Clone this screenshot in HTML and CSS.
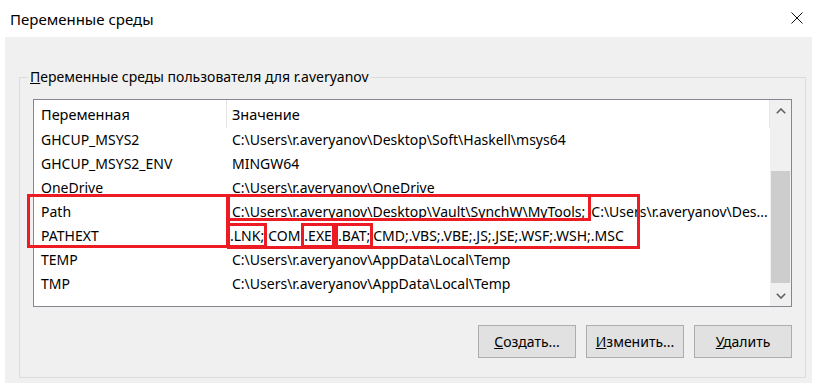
FILE: index.html
```html
<!DOCTYPE html>
<html lang="ru">
<head>
    <meta charset="UTF-8">
    <title>Переменные среды</title>
    <link rel="stylesheet" href="styles.css">
</head>
<body>
    <div class="titlebar">
        <h1>Переменные среды</h1>
        <svg class="close" viewBox="0 0 12 12" width="12" height="12">
            <path d="M0.5 0.5L11.5 11.5M11.5 0.5L0.5 11.5" stroke="#111" stroke-width="1"/>
        </svg>
    </div>

    <div class="panel">
        <fieldset class="group">
            <legend><u>П</u>еременные среды пользователя для r.averyanov</legend>

            <div class="list">
                <div class="list-body">
                    <div class="row head">
                        <div class="c1">Переменная</div>
                        <div class="c2">Значение</div>
                    </div>
                    <div class="row">
                        <div class="c1">GHCUP_MSYS2</div>
                        <div class="c2">C:\Users\r.averyanov\Desktop\Soft\Haskell\msys64</div>
                    </div>
                    <div class="row">
                        <div class="c1">GHCUP_MSYS2_ENV</div>
                        <div class="c2">MINGW64</div>
                    </div>
                    <div class="row">
                        <div class="c1">OneDrive</div>
                        <div class="c2">C:\Users\r.averyanov\OneDrive</div>
                    </div>
                    <div class="row">
                        <div class="c1">Path</div>
                        <div class="c2"><span class="mark-path">C:\Users\r.averyanov\Desktop\Vault\SynchW\MyTools;</span>C:\Users\r.averyanov\Des...</div>
                    </div>
                    <div class="row">
                        <div class="c1">PATHEXT</div>
                        <div class="c2"><span class="mark first">.LNK;</span><span class="plain">COM</span><span class="mark">.EXE</span><span class="mark">.BAT;</span>CMD;.VBS;.VBE;.JS;.JSE;.WSF;.WSH;.MSC</div>
                    </div>
                    <div class="row">
                        <div class="c1">TEMP</div>
                        <div class="c2">C:\Users\r.averyanov\AppData\Local\Temp</div>
                    </div>
                    <div class="row">
                        <div class="c1">TMP</div>
                        <div class="c2">C:\Users\r.averyanov\AppData\Local\Temp</div>
                    </div>

                    <!-- красные рамки поверх строк -->
                    <div class="frame frame-names"></div>
                    <div class="frame frame-values"></div>
                </div>

                <div class="scrollbar">
                    <div class="arrow">
                        <svg viewBox="0 0 10 6" width="10" height="6"><path d="M0.8 5.2L5 1L9.2 5.2" fill="none" stroke="#606060" stroke-width="1.6"/></svg>
                    </div>
                    <div class="track"><div class="thumb"></div></div>
                    <div class="arrow">
                        <svg viewBox="0 0 10 6" width="10" height="6"><path d="M0.8 0.8L5 5L9.2 0.8" fill="none" stroke="#606060" stroke-width="1.6"/></svg>
                    </div>
                </div>
            </div>

            <div class="buttons">
                <button><u>С</u>оздать...</button>
                <button><u>И</u>зменить...</button>
                <button><u>У</u>далить</button>
            </div>
        </fieldset>
    </div>
</body>
</html>
```

FILE: styles.css
```css
body {
    margin: 0;
    width: 817px;
    height: 385px;
    overflow: hidden;
    background-color: #fff;
    font-family: "Noto Sans", "Open Sans", sans-serif;
    font-size: 14px;
    color: #000;
}
.titlebar {
    height: 37px;
    display: flex;
    align-items: center;
    justify-content: space-between;
    padding: 0 14px 0 10px;
    box-sizing: border-box;
}
.titlebar h1 {
    margin: 0;
    font-size: 15px;
    font-weight: normal;
}
.close {
    display: block;
    margin-top: -2px;
}
.panel {
    margin: 0 5px;
    padding: 30px 6px 5px 14px;
    background-color: #f0f0f0;
}
.group {
    margin: 0;
    padding: 12px 13px 19px;
    border: 1px solid #dcdcdc;
    min-width: 0;
}
.group legend {
    margin-left: -5px;
    padding: 0 2px;
    line-height: 20px;
}
.list {
    display: flex;
    height: 208px;
    box-sizing: border-box;
    border: 1px solid #828790;
    background-color: #fff;
}
.list-body {
    flex: 1;
    position: relative;
}
.row {
    display: flex;
    height: 24px;
    line-height: 24px;
    white-space: nowrap;
}
.row.head {
    height: 28px;
    line-height: 28px;
    font-size: 14.5px;
}
.c1 {
    width: 193px;
    padding-left: 7px;
    box-sizing: border-box;
    flex-shrink: 0;
}
.c2 {
    flex: 1;
    padding-left: 5px;
}
.head .c1,
.head .c2 {
    border-right: 1px solid #e5e5e5;
}
.mark-path {
    position: relative;
    padding-right: 6px;
}
.mark-path::before {
    content: "";
    position: absolute;
    left: -6px;
    right: 0;
    top: -8px;
    bottom: 0;
    border: 3px solid #ed1c24;
}
.mark {
    border: 3px solid #ed1c24;
}
.mark.first {
    margin-left: -6px;
    padding-left: 1px;
}
.plain {
    margin: 0 1px;
}
/* рамки вокруг строк Path и PATHEXT */
.frame {
    position: absolute;
    top: 94px;
    border: 3px solid #ed1c24;
    box-sizing: border-box;
}
.frame-names {
    left: -7px;
    width: 202px;
    height: 54px;
}
.frame-values {
    left: 193px;
    width: 413px;
    height: 55px;
}
.scrollbar {
    width: 21px;
    display: flex;
    flex-direction: column;
    background-color: #f0f0f0;
}
.arrow {
    height: 21px;
    display: flex;
    align-items: center;
    justify-content: center;
}
.arrow svg {
    display: block;
}
.track {
    flex: 1;
    padding: 0 1px;
}
.thumb {
    margin-top: 50px;
    height: 112px;
    background-color: #cdcdcd;
}
.buttons {
    display: flex;
    justify-content: flex-end;
    gap: 10px;
    margin-top: 18px;
}
.buttons button {
    width: 98px;
    height: 33px;
    padding: 0;
    background-color: #e1e1e1;
    border: 1px solid #adadad;
    border-radius: 0;
    font-family: inherit;
    font-size: 14px;
    color: #000;
}
```
